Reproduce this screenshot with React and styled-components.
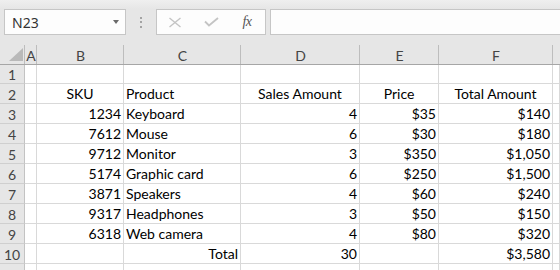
import React from 'react';
import styled, { createGlobalStyle } from 'styled-components';

const Global = createGlobalStyle`
  html, body { margin: 0; padding: 0; background: #ffffff; overflow: hidden; }
  body { font-family: Lato, "Liberation Sans", sans-serif; }
`;

const Page = styled.div`
  width: 560px;
  height: 270px;
  overflow: hidden;
  background: #ffffff;
`;

const Toolbar = styled.div`
  height: 44px;
  box-sizing: border-box;
  padding: 9px 0 0 4px;
  display: flex;
  align-items: flex-start;
  background: linear-gradient(#efefef, #e6e6e6 9px);
`;

const NameBox = styled.div`
  width: 122px;
  height: 26px;
  box-sizing: border-box;
  border: 1px solid #c6c6c6;
  background: #fdfdfd;
  display: flex;
  align-items: center;
  justify-content: space-between;
  padding: 0 6px 0 7px;
  font-family: "Noto Sans", "Open Sans", sans-serif;
  font-size: 14px;
  color: #333333;
`;

const Caret = styled.span`
  width: 0;
  height: 0;
  border-left: 3.5px solid transparent;
  border-right: 3.5px solid transparent;
  border-top: 4px solid #6a6a6a;
`;

const Grip = styled.div`
  width: 30px;
  height: 26px;
  display: flex;
  flex-direction: column;
  align-items: center;
  justify-content: center;
  gap: 2.5px;
`;

const Dot = styled.span`
  width: 2px;
  height: 2px;
  background: #a3a3a3;
`;

const FormulaButtons = styled.div`
  width: 110px;
  height: 26px;
  box-sizing: border-box;
  border: 1px solid #c6c6c6;
  background: #fdfdfd;
  display: flex;
`;

const FxSlot = styled.div`
  width: 36px;
  height: 24px;
  display: flex;
  align-items: center;
  justify-content: center;
`;

const FxText = styled.span`
  font-family: "Liberation Serif", "DejaVu Serif", serif;
  font-style: italic;
  font-size: 14px;
  color: #555555;
  letter-spacing: -0.5px;
  margin-top: -1px;
`;

const FormulaInput = styled.div`
  flex: 1;
  height: 26px;
  margin-left: 4px;
  box-sizing: border-box;
  border: 1px solid #c6c6c6;
  border-right: none;
  background: #fdfdfd;
`;

const Sheet = styled.div`
  display: grid;
  grid-template-columns: 25px 12px 87px 117px 119px 79px 114px 1fr;
  grid-auto-rows: 20px;
  font-size: 14px;
`;

const Corner = styled.div`
  height: 21px;
  box-sizing: border-box;
  background: #e6e6e6;
  border-bottom: 1px solid #a6a6a6;
  position: relative;
  display: flex;
  align-items: flex-end;
  justify-content: flex-end;
  padding: 0 0 3px 0;
`;

const CornerLine = styled.span`
  position: absolute;
  right: 0;
  top: 1px;
  bottom: 0;
  width: 1px;
  background: #bdbdbd;
`;

const ColHead = styled.div`
  height: 21px;
  box-sizing: border-box;
  background: #e6e6e6;
  border-bottom: 1px solid #a6a6a6;
  position: relative;
  display: flex;
  align-items: center;
  justify-content: center;
  padding-top: 2px;
  color: #444444;
  &::after {
    content: "";
    position: absolute;
    right: 0;
    top: 1px;
    bottom: 0;
    width: 1px;
    background: ${p => (p.$last ? 'transparent' : '#bdbdbd')};
  }
`;

const RowHead = styled.div`
  box-sizing: border-box;
  background: #e6e6e6;
  border-right: 1px solid #c3c3c3;
  border-bottom: 1px solid #cfcfcf;
  display: flex;
  align-items: center;
  justify-content: center;
  padding-top: 2px;
  color: #444444;
`;

const Cell = styled.div`
  box-sizing: border-box;
  border-right: 1px solid #d9d9d9;
  border-bottom: 1px solid #d9d9d9;
  display: flex;
  align-items: flex-end;
  justify-content: ${p =>
    p.$align === 'right' ? 'flex-end' : p.$align === 'center' ? 'center' : 'flex-start'};
  padding: 0 2px 0 2px;
  line-height: 19px;
  color: #000000;
  white-space: nowrap;
  overflow: visible;
`;

const cols = ['A', 'B', 'C', 'D', 'E', 'F', ''];

const R = 'right';
const C = 'center';
const L = 'left';

const data = [
  [],
  [['', L], ['SKU', C], ['Product', L], ['Sales Amount', C], ['Price', C], ['Total Amount', C]],
  [['', L], ['1234', R], ['Keyboard', L], ['4', R], ['$35', R], ['$140', R]],
  [['', L], ['7612', R], ['Mouse', L], ['6', R], ['$30', R], ['$180', R]],
  [['', L], ['9712', R], ['Monitor', L], ['3', R], ['$350', R], ['$1,050', R]],
  [['', L], ['5174', R], ['Graphic card', L], ['6', R], ['$250', R], ['$1,500', R]],
  [['', L], ['3871', R], ['Speakers', L], ['4', R], ['$60', R], ['$240', R]],
  [['', L], ['9317', R], ['Headphones', L], ['3', R], ['$50', R], ['$150', R]],
  [['', L], ['6318', R], ['Web camera', L], ['4', R], ['$80', R], ['$320', R]],
  [['', L], ['', L], ['Total', R], ['30', R], ['', L], ['$3,580', R]],
];

function XIcon() {
  return (
    <svg width="14" height="11" viewBox="0 0 14 11">
      <path d="M1.5 1 L12.5 10 M12.5 1 L1.5 10" stroke="#c4c4c4" strokeWidth="1.4" fill="none" />
    </svg>
  );
}

function CheckIcon() {
  return (
    <svg width="15" height="10" viewBox="0 0 15 10">
      <path d="M1 4.5 L5 8.5 L14 1" stroke="#c4c4c4" strokeWidth="1.8" fill="none" />
    </svg>
  );
}

export default function App() {
  return (
    <Page>
      <Global />
      <Toolbar>
        <NameBox>
          <span>N23</span>
          <Caret />
        </NameBox>
        <Grip>
          <Dot />
          <Dot />
          <Dot />
        </Grip>
        <FormulaButtons>
          <FxSlot><XIcon /></FxSlot>
          <FxSlot><CheckIcon /></FxSlot>
          <FxSlot><FxText>fx</FxText></FxSlot>
        </FormulaButtons>
        <FormulaInput />
      </Toolbar>
      <Sheet>
        <Corner>
          <svg width="14" height="13" viewBox="0 0 14 13" style={{ marginRight: 2 }}>
            <path d="M14 0 L14 13 L0 13 Z" fill="#b9b9b9" />
          </svg>
          <CornerLine />
        </Corner>
        {cols.map((c, i) => (
          <ColHead key={i} $last={i === cols.length - 1}>{c}</ColHead>
        ))}
        {data.map((row, ri) => (
          <React.Fragment key={ri}>
            <RowHead>{ri + 1}</RowHead>
            {Array.from({ length: 7 }).map((_, ci) => {
              const cell = row[ci];
              return (
                <Cell key={ci} $align={cell ? cell[1] : L}>
                  {cell ? cell[0] : ''}
                </Cell>
              );
            })}
          </React.Fragment>
        ))}
        <RowHead />
        {Array.from({ length: 7 }).map((_, ci) => (
          <Cell key={`e${ci}`} />
        ))}
      </Sheet>
    </Page>
  );
}
